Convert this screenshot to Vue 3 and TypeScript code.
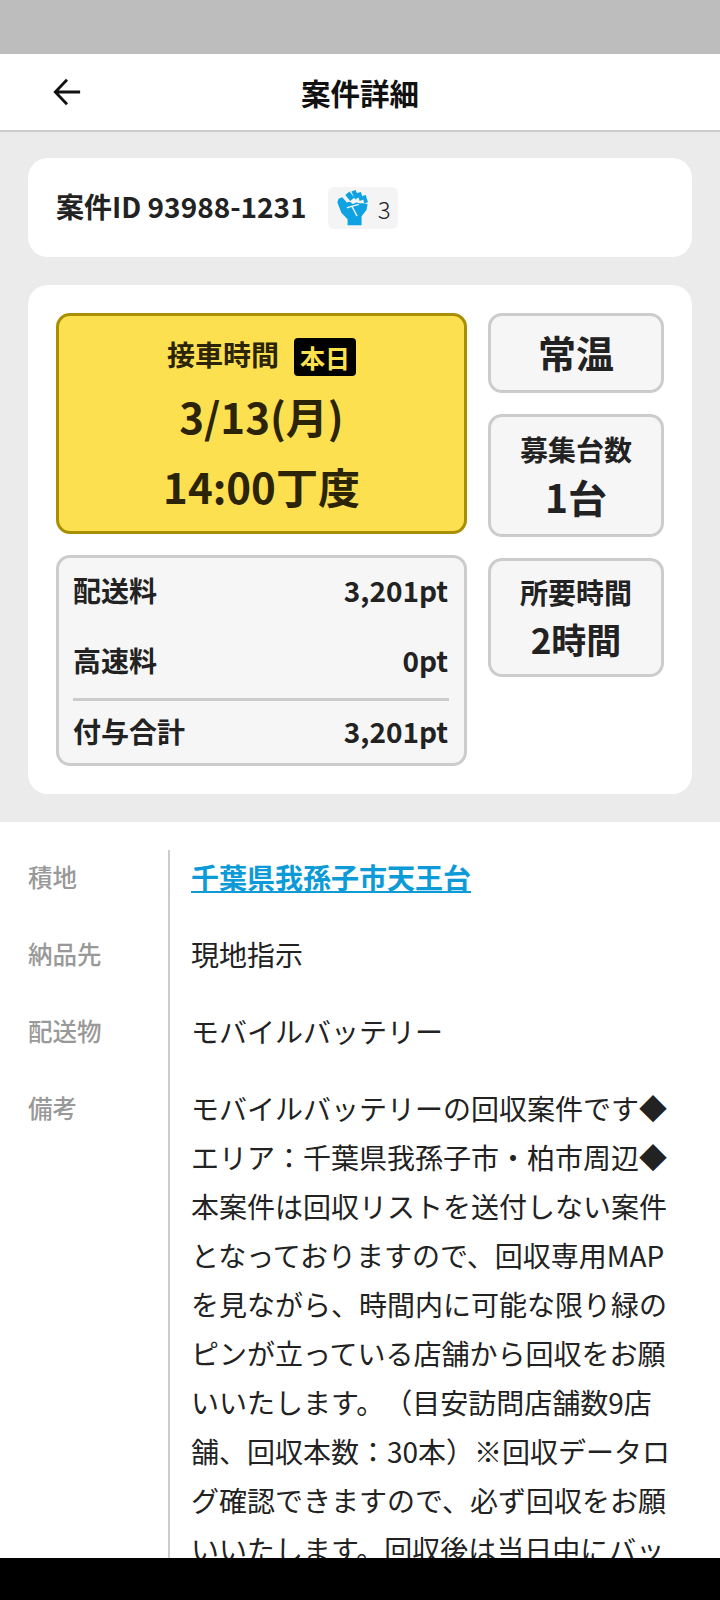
<script setup lang="ts">
interface Fee { label: string; value: string }
interface Row { label: string; text: string; link?: boolean }

const fees: Fee[] = [
  { label: '配送料', value: '3,201pt' },
  { label: '高速料', value: '0pt' },
]

const rows: Row[] = [
  { label: '積地', text: '千葉県我孫子市天王台', link: true },
  { label: '納品先', text: '現地指示' },
  { label: '配送物', text: 'モバイルバッテリー' },
  {
    label: '備考',
    text: 'モバイルバッテリーの回収案件です◆エリア：千葉県我孫子市・柏市周辺◆本案件は回収リストを送付しない案件となっておりますので、回収専用MAPを見ながら、時間内に可能な限り緑のピンが立っている店舗から回収をお願いいたします。（目安訪問店舗数9店舗、回収本数：30本）※回収データログ確認できますので、必ず回収をお願いいたします。回収後は当日中にバッテリーを返却してください。',
  },
]
</script>

<template>
  <div class="page">
    <div class="status-bar"></div>
    <header class="header">
      <svg class="back" viewBox="0 0 32 32" fill="none" stroke="#111" stroke-width="3" aria-hidden="true">
        <path d="M30 16H4M16 3 3.500 16 16 29" />
      </svg>
      <h1>案件詳細</h1>
    </header>

    <main class="summary">
      <section class="card id-card">
        <span class="case-id">案件ID 93988-1231</span>
        <span class="fist-badge">
          <svg class="fist" viewBox="22 25 82 95" aria-hidden="true">
            <path fill="#0ea2e2" d="M23 58 26 48 36 44 48 58 56 56 64 62 74 58 82 60 92 60 103 62 100 78 87 94V118H50V102L34 86Z" />
            <path fill="#0ea2e2" d="M44 38 55 29 68 45 57 54ZM60 29 71 25 80 44 70 50ZM75 33 85 30 92 50 82 54ZM89 41 98 38 104 57 94 60Z" />
            <path fill="none" stroke="#f4f4f4" stroke-width="3.500" d="M48 72 60 68 80 63M62 69 75 94" />
          </svg>
          <span>3</span>
        </span>
      </section>

      <section class="card detail-card">
        <div class="left-col">
          <div class="time-box">
            <div class="time-label">接車時間<span class="today">本日</span></div>
            <div class="time-big">3/13(月)</div>
            <div class="time-big">14:00丁度</div>
          </div>
          <div class="fee-box">
            <div v-for="fee in fees" :key="fee.label" class="fee-row">
              <span>{{ fee.label }}</span><span>{{ fee.value }}</span>
            </div>
            <div class="fee-row fee-total">
              <span>付与合計</span><span>3,201pt</span>
            </div>
          </div>
        </div>
        <div class="right-col">
          <div class="info-box temp">常温</div>
          <div class="info-box count">
            <span class="info-label">募集台数</span>
            <span class="info-value big">1台</span>
          </div>
          <div class="info-box hours">
            <span class="info-label">所要時間</span>
            <span class="info-value">2時間</span>
          </div>
        </div>
      </section>
    </main>

    <section class="details">
      <div class="labels">
        <div v-for="row in rows" :key="row.label" class="label">{{ row.label }}</div>
      </div>
      <div class="values">
        <div v-for="row in rows" :key="row.label" class="value" :class="{ link: row.link }">{{ row.text }}</div>
      </div>
    </section>

    <div class="nav-bar"></div>
  </div>
</template>

<style>
html, body { margin: 0; background: #fff; }
</style>

<style scoped>
.page { position: relative; width: 720px; height: 1600px; overflow: hidden; background: #fff; color: #222; font-family: "Noto Sans CJK JP", "Noto Sans", sans-serif; text-spacing-trim: space-all; }
.status-bar { height: 54px; background: #bdbdbd; }
.header { position: relative; display: flex; height: 78px; box-sizing: border-box; align-items: center; justify-content: center; border-bottom: 2px solid #ccc; background: #fff; }
.header h1 { margin: 2px 0 0; color: #111; font-size: 29.500px; font-weight: 700; line-height: 1; }
.back { position: absolute; left: 52px; top: 23px; width: 30px; height: 30px; }
.summary { display: flex; flex-direction: column; gap: 28px; padding: 26px 28px 28px; background: #ebebeb; }
.card { border-radius: 20px; background: #fff; }
.id-card { display: flex; height: 99px; align-items: center; gap: 21px; padding: 0 28px; box-sizing: border-box; }
.case-id { margin-bottom: 3px; font-size: 28px; font-weight: 700; line-height: 1; }
.fist-badge { display: flex; width: 70px; height: 42px; box-sizing: border-box; align-items: center; gap: 10px; margin-top: 1px; border-radius: 6px; background: #f4f4f4; padding-left: 9px; font-size: 24px; font-weight: 300; }
.fist { width: 31px; height: 36px; }
.detail-card { display: flex; gap: 21px; padding: 28px; }
.left-col { display: flex; width: 411px; flex-direction: column; gap: 21px; }
.right-col { display: flex; width: 176px; flex-direction: column; gap: 21px; }
.time-box { display: flex; height: 221px; box-sizing: border-box; flex-direction: column; align-items: center; border: 3px solid #a98f00; border-radius: 14px; background: #fde04f; padding-top: 19px; color: #2b2408; }
.time-label { display: flex; height: 38px; align-items: flex-start; gap: 15px; margin-bottom: 8px; font-size: 28px; font-weight: 700; line-height: 38px; }
.today { margin-top: 3px; border-radius: 4px; background: #000; padding: 0 6px; color: #fde04f; font-size: 25px; line-height: 38px; }
.time-big { font-size: 42px; font-weight: 700; line-height: 70px; }
.fee-box { height: 211px; box-sizing: border-box; border: 3px solid #ccc; border-radius: 14px; background: #f6f6f6; padding: 0 15px 0 14px; }
.fee-row { display: flex; height: 70px; align-items: center; justify-content: space-between; padding-bottom: 6px; padding-right: 1px; box-sizing: border-box; font-size: 28px; font-weight: 700; }
.fee-total { height: 64px; border-top: 3px solid #ccc; padding-bottom: 2px; }
.info-box { display: flex; box-sizing: border-box; flex-direction: column; align-items: center; justify-content: center; border: 3px solid #ccc; border-radius: 14px; background: #f6f6f6; font-weight: 700; }
.temp { height: 80px; padding-bottom: 4px; font-size: 38px; }
.count { height: 123px; padding-bottom: 4px; }
.hours { height: 119px; padding-bottom: 2px; }
.info-label { font-size: 28px; line-height: 44px; }
.info-value { font-size: 35px; line-height: 50px; }
.info-value.big { font-size: 39px; }
.details { display: flex; padding: 28px 0 0 28px; }
.labels { width: 140px; flex: none; }
.label { height: 77px; color: #999; font-size: 24.500px; font-weight: 500; line-height: 54px; }
.values { width: 498px; border-left: 2px solid #ccc; padding-left: 21px; padding-top: 3px; }
.value { margin-bottom: 28px; font-size: 28px; line-height: 49px; color: #222; }
.value.link { color: #0d9bd8; font-weight: 700; text-decoration: underline; }
.nav-bar { position: absolute; left: 0; right: 0; bottom: 0; height: 42px; background: #000; }
</style>
